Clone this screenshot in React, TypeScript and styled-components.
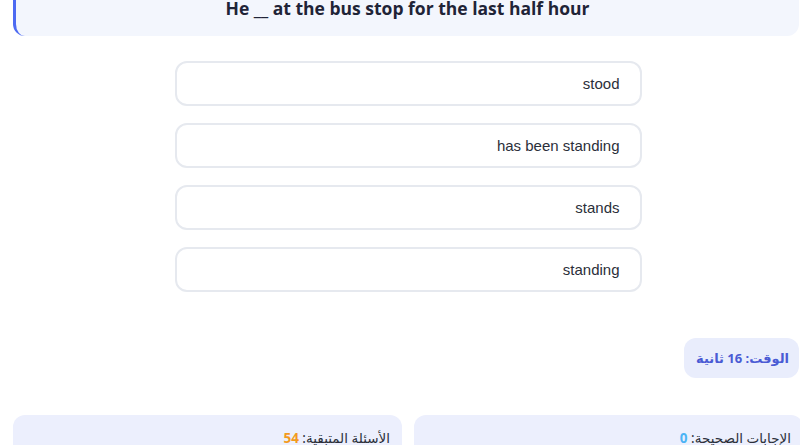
import styled, { createGlobalStyle } from 'styled-components'

const GlobalStyle = createGlobalStyle`
  html, body {
    margin: 0;
    padding: 0;
    background: #ffffff;
    overflow: hidden;
  }
  body {
    font-family: 'Open Sans', 'DejaVu Sans', sans-serif;
  }
`

const Page = styled.div`
  margin-top: -20px;
  padding-left: 13px;
  width: 786px;
  direction: rtl;
`

const QuestionCard = styled.div`
  background: #f3f6fd;
  border-left: 3px solid #4d6af2;
  border-radius: 0 0 12px 12px;
  padding: 18px 16px;
  text-align: center;
`

const QuestionText = styled.h2`
  margin: 0;
  direction: ltr;
  font-family: 'Open Sans', sans-serif;
  font-size: 17.5px;
  line-height: 20px;
  font-weight: 700;
  color: #1f2437;
`

const Options = styled.div`
  display: flex;
  flex-direction: column;
  align-items: center;
  gap: 17px;
  margin-top: 25px;
  padding-left: 4px;
`

const Option = styled.button`
  box-sizing: border-box;
  width: 467px;
  height: 45px;
  background: #ffffff;
  border: 2px solid #e6e9ef;
  border-radius: 12px;
  padding: 0 20px;
  text-align: right;
  font-family: 'Liberation Sans', Arial, sans-serif;
  font-size: 15px;
  color: #2b2f3a;
  cursor: pointer;
`

const TimerRow = styled.div`
  display: flex;
  justify-content: flex-start;
  margin-top: 46px;
`

const Timer = styled.div`
  box-sizing: border-box;
  height: 40px;
  display: flex;
  align-items: center;
  padding: 0 10px 0 12px;
  background: #e9edfc;
  border-radius: 12px;
  font-family: 'Noto Sans', 'DejaVu Sans', sans-serif;
  font-size: 13px;
  font-weight: 700;
  color: #4a5bd4;
`

const Stats = styled.div`
  display: grid;
  grid-template-columns: 1fr 1fr;
  gap: 12px;
  margin-top: 37px;
  margin-right: -4px;
`

const StatCard = styled.div`
  background: #eceffd;
  border-radius: 12px;
  padding: 14px 12px 20px;
  font-family: 'Noto Sans', 'DejaVu Sans', sans-serif;
  font-size: 13.5px;
  line-height: 18px;
  color: #2b2f3a;
`

const StatValue = styled.span<{ tone: 'blue' | 'orange' }>`
  font-weight: 700;
  color: ${({ tone }) => (tone === 'blue' ? '#4cb4f5' : '#f39a1d')};
`

const answers = ['stood', 'has been standing', 'stands', 'standing']

export default function App() {
  return (
    <>
      <GlobalStyle />
      <Page>
        <QuestionCard>
          <QuestionText>He __ at the bus stop for the last half hour</QuestionText>
        </QuestionCard>
        <Options>
          {answers.map((a) => (
            <Option key={a}>{a}</Option>
          ))}
        </Options>
        <TimerRow>
          <Timer>الوقت: 16 ثانية</Timer>
        </TimerRow>
        <Stats>
          <StatCard>
            الإجابات الصحيحة: <StatValue tone="blue">0</StatValue>
          </StatCard>
          <StatCard>
            الأسئلة المتبقية: <StatValue tone="orange">54</StatValue>
          </StatCard>
        </Stats>
      </Page>
    </>
  )
}
